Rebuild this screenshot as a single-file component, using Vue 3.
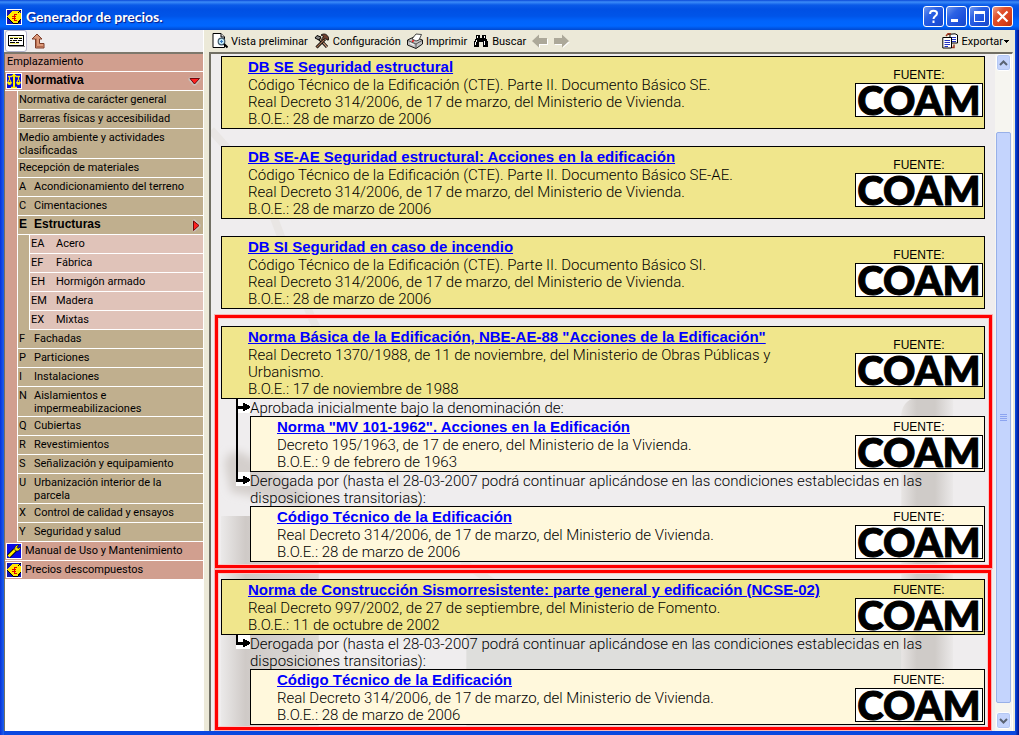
<script setup>
const sourceName = 'COAM'

const chapters = [
  { text: 'Normativa de carácter general' },
  { text: 'Barreras físicas y accesibilidad' },
  { text: 'Medio ambiente y actividades clasificadas' },
  { text: 'Recepción de materiales' },
  { code: 'A', text: 'Acondicionamiento del terreno' },
  { code: 'C', text: 'Cimentaciones' },
  {
    code: 'E',
    text: 'Estructuras',
    open: true,
    children: [
      { code: 'EA', text: 'Acero' },
      { code: 'EF', text: 'Fábrica' },
      { code: 'EH', text: 'Hormigón armado' },
      { code: 'EM', text: 'Madera' },
      { code: 'EX', text: 'Mixtas' }
    ]
  },
  { code: 'F', text: 'Fachadas' },
  { code: 'P', text: 'Particiones' },
  { code: 'I', text: 'Instalaciones' },
  { code: 'N', text: 'Aislamientos e impermeabilizaciones' },
  { code: 'Q', text: 'Cubiertas' },
  { code: 'R', text: 'Revestimientos' },
  { code: 'S', text: 'Señalización y equipamiento' },
  { code: 'U', text: 'Urbanización interior de la parcela' },
  { code: 'X', text: 'Control de calidad y ensayos' },
  { code: 'Y', text: 'Seguridad y salud' }
]

const cte = {
  title: 'Código Técnico de la Edificación',
  lines: ['Real Decreto 314/2006, de 17 de marzo, del Ministerio de Vivienda.', 'B.O.E.: 28 de marzo de 2006']
}
const repealed =
  'Derogada por (hasta el 28-03-2007 podrá continuar aplicándose en las condiciones establecidas en las disposiciones transitorias):'

const basicDoc = (title, code) => ({
  title,
  lines: [`Código Técnico de la Edificación (CTE). Parte II. Documento Básico ${code}.`, ...cte.lines]
})

const entries = [
  { doc: basicDoc('DB SE Seguridad estructural', 'SE') },
  { doc: basicDoc('DB SE-AE Seguridad estructural: Acciones en la edificación', 'SE-AE') },
  { doc: basicDoc('DB SI Seguridad en caso de incendio', 'SI') },
  {
    marked: true,
    doc: {
      title: 'Norma Básica de la Edificación, NBE-AE-88 "Acciones de la Edificación"',
      lines: [
        'Real Decreto 1370/1988, de 11 de noviembre, del Ministerio de Obras Públicas y',
        'Urbanismo.',
        'B.O.E.: 17 de noviembre de 1988'
      ]
    },
    related: [
      {
        label: 'Aprobada inicialmente bajo la denominación de:',
        doc: {
          title: 'Norma "MV 101-1962". Acciones en la Edificación',
          lines: ['Decreto 195/1963, de 17 de enero, del Ministerio de la Vivienda.', 'B.O.E.: 9 de febrero de 1963']
        }
      },
      { label: repealed, doc: cte }
    ]
  },
  {
    marked: true,
    doc: {
      title: 'Norma de Construcción Sismorresistente: parte general y edificación (NCSE-02)',
      lines: ['Real Decreto 997/2002, de 27 de septiembre, del Ministerio de Fomento.', 'B.O.E.: 11 de octubre de 2002']
    },
    related: [{ label: repealed, doc: cte }]
  }
]

const cardsOf = (entry) => [
  { doc: entry.doc },
  ...(entry.related || []).map((r, i, all) => ({ ...r, nested: true, last: i === all.length - 1 }))
]
</script>

<template>
  <div class="window">
    <header class="titlebar">
      <svg class="app-icon" viewBox="0 0 16 16" shape-rendering="crispEdges" aria-hidden="true">
        <rect width="16" height="16" fill="#fff" />
        <rect x="1" y="1" width="14" height="14" fill="#1414b4" />
        <path d="M1 8L6 2H13L15 5V10L12 14H7Z" fill="#ffe800" />
        <path d="M1 8L7 14H12L15 10" fill="none" stroke="#000" />
        <path d="M11 5H8V11H11M6 7H10M6 9H10" fill="none" stroke="#e00000" />
        <path d="M12 4L15 1" stroke="#000" />
      </svg>
      <h1>Generador de precios.</h1>
      <div class="controls">
        <button type="button" aria-label="Ayuda">
          <svg viewBox="0 0 19 19"><path d="M6 7C6 2.500 13 3 13 6.500C13 9 9.500 9 9.500 12M9.500 13.500V16" fill="none" stroke="#fff" stroke-width="2" /></svg>
        </button>
        <button type="button" aria-label="Minimizar">
          <svg viewBox="0 0 19 19"><path d="M4 13.500H11" stroke="#fff" stroke-width="3" /></svg>
        </button>
        <button type="button" aria-label="Maximizar">
          <svg viewBox="0 0 19 19">
            <rect x="4.500" y="4.500" width="10" height="10" fill="none" stroke="#fff" /><rect x="4" y="4" width="11" height="3" fill="#fff" />
          </svg>
        </button>
        <button type="button" class="close" aria-label="Cerrar">
          <svg viewBox="0 0 19 19"><path d="M4.500 4.500L14.500 14.500M14.500 4.500L4.500 14.500" stroke="#fff" stroke-width="2.200" /></svg>
        </button>
      </div>
    </header>

    <div class="body">
      <aside class="side">
        <div class="side-tools">
          <button type="button" class="tool pressed" aria-label="Índice">
            <svg width="17" height="12" viewBox="0 0 17 12" shape-rendering="crispEdges">
              <rect x="0.500" y="0.500" width="15" height="10" fill="#fff" stroke="#000" />
              <path d="M1 11.500H17V1" fill="none" stroke="#8a8a8a" />
              <path d="M2 2.500H14M2 5.500H14M2 8.500H11" stroke="#f4f070" />
              <path d="M2 3.500H5M6 3.500H10M11 3.500H14M2 5.500H4M5 5.500H9M10 5.500H14M2 7.500H7M8 7.500H11" stroke="#000" />
            </svg>
          </button>
          <button type="button" class="tool" aria-label="Subir">
            <svg width="14" height="16" viewBox="0 0 14 16">
              <path d="M6 1L11 6H8.500V10.500H13V15H4.500V6H1Z" fill="#dc9878" stroke="#7c3c28" stroke-linejoin="round" />
              <path d="M5.500 5.500V13.500H12" fill="none" stroke="#b46c50" />
            </svg>
          </button>
        </div>
        <nav class="tree">
          <a href="#" class="row top first">Emplazamiento</a>
          <a href="#" class="row top current">
            <svg class="row-icon" viewBox="0 0 16 16" aria-hidden="true">
              <rect width="16" height="16" fill="#fff" /><rect x="1" y="1" width="14" height="14" fill="#0a0adc" />
              <path d="M8 1V14" stroke="#ffee00" stroke-width="2" />
              <path d="M5 14.500H11M2 3.500H5.500L7 2.500H9L10.500 3.500H14" fill="none" stroke="#ffee00" stroke-width="1.500" />
              <path d="M1 9H6Q5.500 12 3.500 12Q1.500 12 1 9ZM10 9H15Q14.500 12 12.500 12Q10.500 12 10 9Z" fill="#ffee00" />
              <path d="M3.500 4V6L2 9M3.500 6L5 9M12.500 4V6L11 9M12.500 6L14 9" fill="none" stroke="#ffee00" />
            </svg>
            <span class="name">Normativa</span>
            <svg class="mark" width="13" height="9" viewBox="0 0 13 9" aria-hidden="true">
              <path d="M.5 1.500L1.500 .5H11.500L12.500 1.500V3L7.500 8.500H5.500L.5 3Z" fill="#c8c0bc" />
              <path d="M2 1.500H11.500L6.500 7Z" fill="#ff2020" stroke="#700808" />
            </svg>
          </a>
          <div class="branch top-branch">
            <template v-for="c in chapters" :key="c.text">
              <a href="#" class="row" :class="{ current: c.open }">
                <span v-if="c.code" class="code">{{ c.code }}</span>
                <span class="name">{{ c.text }}</span>
                <svg v-if="c.open" class="mark" width="9" height="13" viewBox="0 0 9 13" aria-hidden="true">
                  <path d="M1.500 .5L.5 1.500V11.500L1.500 12.500H3L8.500 7.500V5.500L3 .5Z" fill="#c8c0bc" />
                  <path d="M1.500 2V11.500L7 6.500Z" fill="#ff2020" stroke="#700808" />
                </svg>
              </a>
              <div v-if="c.children" class="branch sub-branch">
                <a v-for="s in c.children" :key="s.code" href="#" class="row leaf">
                  <span class="code wide">{{ s.code }}</span>
                  <span class="name">{{ s.text }}</span>
                </a>
              </div>
            </template>
          </div>
          <a href="#" class="row top">
            <svg class="row-icon" viewBox="0 0 16 16" aria-hidden="true">
              <rect width="16" height="16" fill="#fff" /><rect x="1" y="1" width="14" height="14" fill="#0a0ae6" />
              <path d="M2.500 13.500L9 7" stroke="#000" stroke-width="4.500" /><path d="M2.500 13.500L10 6" stroke="#ffee00" stroke-width="2.500" />
              <path d="M9 7.500C8 4 10 2 12.500 2L11 4.500L12 5.500L14.500 4C14.500 7 12 9 9 7.500Z" fill="#ffee00" stroke="#000" stroke-width="0.600" />
            </svg>
            <span class="name">Manual de Uso y Mantenimiento</span>
          </a>
          <a href="#" class="row top">
            <svg class="row-icon" viewBox="0 0 16 16" shape-rendering="crispEdges" aria-hidden="true">
              <rect width="16" height="16" fill="#fff" /><rect x="1" y="1" width="14" height="14" fill="#1414b4" />
              <path d="M1 8L6 2H13L15 5V10L12 14H7Z" fill="#ffe800" />
              <path d="M1 8L7 14H12L15 10" fill="none" stroke="#000" />
              <path d="M11 5H8V11H11M6 7H10M6 9H10" fill="none" stroke="#e00000" /><path d="M12 4L15 1" stroke="#000" />
            </svg>
            <span class="name">Precios descompuestos</span>
          </a>
        </nav>
      </aside>

      <main class="main">
        <div class="toolbar">
          <button type="button" class="action">
            <svg width="16" height="16" viewBox="0 0 16 16">
              <path d="M1 .5H9L12.500 4V14.500H1Z" fill="#fff" stroke="#000" /><path d="M9 .5V4H12.500" fill="#ddd" stroke="#000" />
              <circle cx="9.500" cy="8.500" r="3.300" fill="#c0e8f8" stroke="#405868" stroke-width="1.200" /><path d="M12 11L15.500 14.500" stroke="#000" stroke-width="2" /><path d="M8 8.500H11M9.500 7V10" stroke="#3878c0" />
            </svg>
            Vista preliminar
          </button>
          <button type="button" class="action">
            <svg width="16" height="16" viewBox="0 0 16 16">
              <path d="M4.500 5L13 14" stroke="#000" stroke-width="3" /><path d="M5 5L13 14" stroke="#c89878" stroke-width="1.300" />
              <path d="M11 6L2.500 14.500" stroke="#000" stroke-width="3" /><path d="M11 6L2.500 14.500" stroke="#a07050" stroke-width="1.300" />
              <path d="M1 5L3 2.500L7 4L5 7Z" fill="#888" stroke="#000" /><path d="M7 2C10 0 13 1 14.500 4.500V7H13L11.500 5L9.500 7L8 5.500L9.500 3.500Z" fill="#704030" stroke="#000" stroke-width=".8" />
            </svg>
            Configuración
          </button>
          <button type="button" class="action">
            <svg width="16" height="16" viewBox="0 0 16 16">
              <path d="M.5 7L7 4L15.500 7V11L9 15.500L.5 12Z" fill="#c4c4c4" stroke="#000" stroke-width=".9" /><path d="M1 7.500L9 11L15 7.500M9 11V15" fill="none" stroke="#555" />
              <path d="M5 6L9 1L14.500 1.500L12 7L9 8Z" fill="#fff" stroke="#333" stroke-width=".9" /><path d="M3 10L7 12" stroke="#fff" /><path d="M5 8.500L7 7.500" stroke="#e02020" stroke-width="1.500" />
            </svg>
            Imprimir
          </button>
          <button type="button" class="action">
            <svg width="16" height="14" viewBox="0 0 16 14" shape-rendering="crispEdges">
              <path d="M3 1H7V4H9V1H13V4L15 8V13H10V8H6V13H1V8L3 4Z" fill="#000" /><path d="M4.500 2V4M11.500 2V4M3.500 6V8M2.500 8V11M11.500 7V11" stroke="#fff" stroke-width="1" />
            </svg>
            Buscar
          </button>
          <button type="button" class="action" disabled aria-label="Anterior">
            <svg width="16" height="14" viewBox="0 0 16 14"><path d="M1.500 8L8 14V11H16V5" fill="#fff" /><path d="M0 7L7 .5V4H15V10H7V13.500Z" fill="#aca899" /></svg>
          </button>
          <button type="button" class="action" disabled aria-label="Siguiente">
            <svg width="16" height="14" viewBox="0 0 16 14"><path d="M16 8L9 14V11H1V9" fill="#fff" /><path d="M15 7L8 .5V4H0V10H8V13.500Z" fill="#aca899" /></svg>
          </button>
          <button type="button" class="action export">
            <svg width="17" height="16" viewBox="0 0 17 16">
              <path d="M5 1.500L13 .8L15.500 2V10H8V1.500" fill="#fff" stroke="#000" /><path d="M9 4.500H14M9 6.500H14M9 8.500H14" stroke="#2030c0" />
              <path d="M.8 4.500H9.500V15H.8Z" fill="#fff" stroke="#000" /><path d="M2.500 7.500H8M2.500 9.500H8M2.500 11.500H8M2.500 13.500H6" stroke="#2030c0" />
              <path d="M4 3L6 .8H9M10 14.500H12V11.500" fill="none" stroke="#a03820" stroke-width="1.500" />
            </svg>
            <span>Exportar</span>
            <svg class="caret" width="5" height="3" viewBox="0 0 5 3" shape-rendering="crispEdges"><path d="M0 0H5L2.500 3Z" fill="#000" /></svg>
          </button>
        </div>

        <div class="pane">
          <div class="content">
            <svg class="watermark" viewBox="0 0 786 677" preserveAspectRatio="none" aria-hidden="true">
              <defs>
                <linearGradient id="pillar"><stop offset="0" stop-color="#e8e5e4" /><stop offset=".3" stop-color="#cfcbc8" /><stop offset=".65" stop-color="#cfcbc8" /><stop offset="1" stop-color="#ebe9e9" /></linearGradient>
                <linearGradient id="block"><stop offset="0" stop-color="#ebe9e9" /><stop offset=".25" stop-color="#cfcac7" /><stop offset="1" stop-color="#dcd9d7" /></linearGradient>
                <filter id="soft"><feGaussianBlur stdDeviation="4" /></filter>
              </defs>
              <path d="M0 76L52 134L100 262L180 420L258 512L300 540" fill="none" stroke="#e9e6e4" stroke-width="8" />
              <path d="M256 560H694V677H256Z" fill="#dededc" />
              <path d="M692 360Q694 344 712 343H744V677H692Z" fill="url(#pillar)" />
              <path d="M14 412Q14 396 30 398L100 440V456L60 446L20 438Z" fill="#d4cfcc" filter="url(#soft)" />
              <path d="M10 462H108V677H10Z" fill="url(#block)" />
            </svg>
            <section v-for="entry in entries" :key="entry.doc.title" class="entry" :class="{ marked: entry.marked }">
              <div v-for="item in cardsOf(entry)" :key="item.doc.title" :class="{ relation: item.nested }">
                <div v-if="item.nested" class="rail" :class="{ through: !item.last }">
                  <svg width="14" height="14" viewBox="0 0 14 14" shape-rendering="crispEdges" aria-hidden="true">
                    <rect width="14" height="14" fill="#fff" />
                    <path d="M0 0H2V7H7V4H9V5H11V6H13V7H14V9H13V10H11V11H9V12H7V10H0Z" fill="#000" />
                    <path v-if="!item.last" d="M0 9H2V14H0Z" fill="#000" />
                  </svg>
                </div>
                <div class="stack">
                  <p v-if="item.nested" class="label">{{ item.label }}</p>
                  <article class="card" :class="{ pale: item.nested }">
                    <div class="text">
                      <h2><a href="#">{{ item.doc.title }}</a></h2>
                      <p v-for="line in item.doc.lines" :key="line">{{ line }}</p>
                    </div>
                    <div class="source">
                      <span class="caption">FUENTE:</span>
                      <span class="logo">{{ sourceName }}</span>
                    </div>
                  </article>
                </div>
              </div>
            </section>
          </div>
          <div class="scrollbar">
            <button type="button" class="arrow" aria-label="Desplazar arriba">
              <svg width="9" height="6" viewBox="0 0 9 6"><path d="M1 5L4.500 1.500L8 5" fill="none" stroke="#5a6474" stroke-width="2" /></svg>
            </button>
            <div class="before"></div>
            <div class="thumb"><i></i><i></i><i></i><i></i></div>
            <div class="after"></div>
            <button type="button" class="arrow" aria-label="Desplazar abajo">
              <svg width="9" height="6" viewBox="0 0 9 6"><path d="M1 1L4.500 4.500L8 1" fill="none" stroke="#5a6474" stroke-width="2" /></svg>
            </button>
          </div>
        </div>
      </main>
    </div>
  </div>
</template>

<style>
body {
  margin: 0;
}
</style>

<style scoped>
* {
  box-sizing: border-box;
}
.window {
  display: flex;
  flex-direction: column;
  min-height: 100vh;
  padding: 0 4px 4px;
  background: linear-gradient(90deg, #0831d9 0, #1c62ee 4px, #0a48e0 4px, #0a48e0 calc(100% - 4px), #0a4ee4 calc(100% - 4px), #00138c 100%);
  font-family: Roboto, "Liberation Sans", Arial, sans-serif;
  color: #000;
}
button {
  margin: 0;
  padding: 0;
  border: 0;
  background: none;
  font: inherit;
  color: inherit;
}
svg {
  display: block;
  flex: none;
}
h1, h2, p {
  margin: 0;
}

.titlebar {
  display: flex;
  align-items: center;
  height: 30px;
  margin: 0 -4px;
  padding: 3px 6px 0 6px;
  background: linear-gradient(#0a48d8 0, #3c8cf8 2px, #0a5ae8 5px, #0050e4 9px, #0054e8 16px, #0064fc 21px, #0066ff 26px, #0048d0 30px);
}
.app-icon {
  width: 16px;
  height: 16px;
}
h1 {
  flex: 1;
  margin-left: 4px;
  font: bold 14px/18px Lato, sans-serif;
  color: #fff;
  text-shadow: 1px 1px 1px #0a1883;
}
.controls {
  display: flex;
  gap: 2px;
}
.controls button {
  width: 21px;
  height: 21px;
  border: 1px solid #fff;
  border-radius: 3px;
  background: linear-gradient(135deg, #7098f0, #2c62e4 35%, #1c50dc 70%, #1a48c4);
}
.controls svg {
  width: 19px;
  height: 19px;
}
.controls .close {
  background: linear-gradient(135deg, #f0a088, #e0502c 35%, #d8401c 70%, #b83010);
}

.body {
  display: flex;
  flex: 1;
}
.side {
  display: flex;
  flex-direction: column;
  width: 200px;
  border-right: 1px solid #fff;
  background: #fff;
  font-size: 11px;
  line-height: 13px;
}
.side-tools {
  display: flex;
  height: 22px;
  padding-left: 1px;
  background: #efedee;
}
.tool {
  display: flex;
  align-items: center;
  justify-content: center;
  width: 22px;
  height: 22px;
}
.tool.pressed {
  border: 1px solid #b4b4cc;
  border-radius: 3px;
  background: #fff;
}
.tree {
  flex: 1;
  display: flex;
  flex-direction: column;
  border-top: 2px solid #7c786c;
  border-left: 1px solid #716f64;
}
.row {
  display: flex;
  align-items: flex-start;
  min-height: 19px;
  padding: 2px 2px 1px 1px;
  border-bottom: 1px solid #fff;
  background: #c0af8e;
  color: #000;
  text-decoration: none;
}
.row.top {
  background: #d19f8f;
  padding-left: 0;
}
.row.first {
  min-height: 18px;
  padding: 1px 2px 1px 2px;
}
.row.leaf {
  background: #e0c3b9;
}
.row.current {
  font-family: "Liberation Sans", Arial, sans-serif;
  font-size: 12px;
  font-weight: bold;
}
.row-icon {
  width: 16px;
  height: 16px;
  margin: -1px 3px -1px 1px;
}
.name {
  flex: 1;
  padding-right: 16px;
}
.code {
  width: 15px;
}
.code.wide {
  width: 25px;
}
.mark {
  align-self: center;
}
.branch {
  display: flex;
  flex-direction: column;
  border-left: 1px solid #fff;
}
.top-branch {
  margin-left: 12px;
  box-shadow: -12px 0 #d19f8f;
}
.sub-branch {
  margin-left: 11px;
  box-shadow: -11px 0 #c0af8e;
}

.main {
  flex: 1;
  min-width: 0;
  display: flex;
  flex-direction: column;
  padding: 0 2px 0 5px;
  background: #ece9d8;
}
.toolbar {
  display: flex;
  align-items: center;
  gap: 6px;
  height: 22px;
  padding: 0 4px 0 3px;
  font-size: 11px;
}
.action {
  display: flex;
  align-items: center;
  gap: 3px;
  white-space: nowrap;
}
.export {
  margin-left: auto;
}
.caret {
  margin-left: -2px;
}
.pane {
  display: flex;
  flex: 1;
  border-top: 2px solid #716f64;
  border-left: 2px solid #716f64;
  border-right: 1px solid #fff;
  background: #efedee;
}
.content {
  position: relative;
  flex: 1;
  min-width: 0;
  padding: 2px 3px 1px 4px;
  font-size: 15px;
  font-weight: 300;
  line-height: 17px;
}
.watermark {
  position: absolute;
  inset: 0;
  width: 100%;
  height: 100%;
}
.entry {
  position: relative;
  margin: 0 7px 17px 6px;
}
.entry.marked {
  margin: -11px 0 13px 0;
  padding: 8px 4px 3px 3px;
  border: 3px solid #f00;
  box-shadow: 0 0 0 1px #f8b4b4, inset 0 0 0 1px #f8c8c8;
}
.entry.marked + .marked {
  margin: -11px 1px 0 0;
  padding: 6px 3px 2px 3px;
}
.relation {
  display: flex;
  padding-left: 15px;
}
.rail {
  width: 14px;
  flex: none;
}
.rail.through {
  background: linear-gradient(#000, #000) 0 0 / 2px 100% no-repeat;
}
.stack {
  flex: 1;
  min-width: 0;
}
.label {
  padding-top: 1px;
  margin-bottom: -1px;
}
.card {
  display: flex;
  align-items: center;
  border: 1px solid #000;
  padding: 0 1px 0 26px;
  background: #f0e68c;
}
.card.pale {
  background: #fff8dc;
}
.text {
  flex: 1;
  min-width: 0;
  padding-top: 1px;
}
h2 {
  padding-bottom: 1px;
  font-family: "Liberation Sans", Arial, sans-serif;
  font-size: 15px;
  line-height: 18px;
}
h2 a {
  color: #00f;
}
.source {
  display: flex;
  flex-direction: column;
  align-items: center;
  width: 128px;
}
.caption {
  font-family: "Liberation Sans", Arial, sans-serif;
  font-size: 12px;
  line-height: 15px;
}
.logo {
  width: 128px;
  height: 34px;
  border: 1px solid #000;
  background: #fff;
  text-align: center;
  font: 900 40px/32px Lato, sans-serif;
  -webkit-text-stroke: 1px #000;
}

.scrollbar {
  display: flex;
  flex-direction: column;
  width: 17px;
  padding: 0 1px 2px;
  background: #f6f5f0;
}
.arrow {
  display: flex;
  align-items: center;
  justify-content: center;
  height: 17px;
  border: 1px solid #fff;
  border-radius: 3px;
  background: #c4d4fc;
  box-shadow: inset 0 0 0 1px #b4c8f4;
}
.before {
  flex: 61;
}
.thumb {
  flex: 571;
  display: flex;
  flex-direction: column;
  align-items: center;
  justify-content: center;
  gap: 1px;
  border: 1px solid #98b0e8;
  border-radius: 2px;
  background: #c4d4fd;
}
.thumb i {
  width: 7px;
  height: 1px;
  background: #8ca4f0;
}
.after {
  flex: 9;
}
</style>
